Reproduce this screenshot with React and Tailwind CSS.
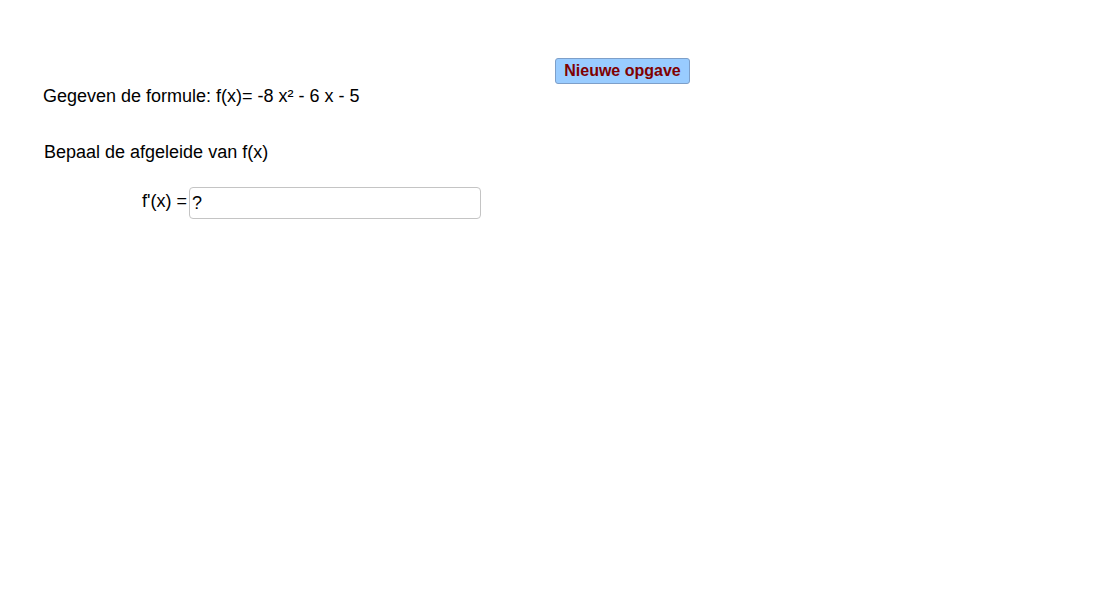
import React, { useState } from "react";

const App = () => {
  const [answer, setAnswer] = useState("?");

  return (
    <div
      className="w-[1102px] h-[610px] bg-white text-black text-[18px] leading-[21px] overflow-hidden"
      style={{ fontFamily: '"Liberation Sans", Arial, sans-serif' }}
    >
      <div className="pt-[58px] pl-[555px]">
        <button className="w-[135px] h-[26px] bg-[#99ccff] border border-[#7d9fc9] rounded-[3px] text-[#800000] font-bold text-[16px] leading-[18px]">
          Nieuwe opgave
        </button>
      </div>

      <p className="mt-[2px] pl-[43px]">Gegeven de formule: f(x)= -8 x² - 6 x - 5</p>

      <p className="mt-[35px] pl-[44px]">Bepaal de afgeleide van f(x)</p>

      <div className="mt-[24px] pl-[142px] flex items-center">
        <span className="mr-[2px] -mt-[3px]">f'(x) =</span>
        <input
          value={answer}
          onChange={(e) => setAnswer(e.target.value)}
          className="w-[292px] h-[32px] border border-[#c4c4c4] rounded-[4px] px-[2px] text-[18px] outline-none"
          style={{ fontFamily: '"Liberation Sans", Arial, sans-serif' }}
        />
      </div>
    </div>
  );
};

export default App;
